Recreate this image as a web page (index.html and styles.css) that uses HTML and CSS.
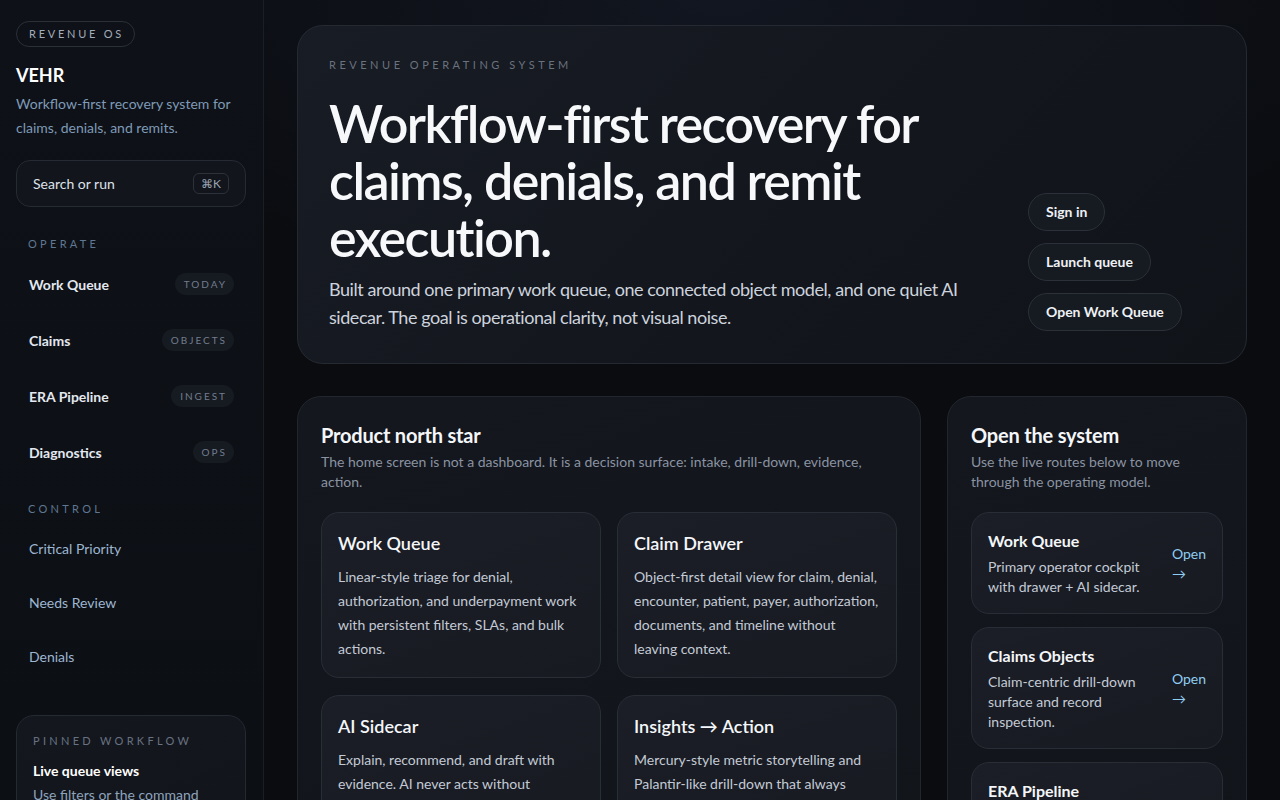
FILE: index.html
```html
<!DOCTYPE html>
<html lang="en">
    <head>
        <title>VEHR</title>

        <meta charset="utf-8">

        <link rel="stylesheet" href="styles.css">
    </head>

    <body>
        <div class="app">
            <aside class="sidebar">
                <div class="pill">Revenue OS</div>
                <div class="brand">VEHR</div>
                <div class="tagline">Workflow-first recovery system for claims, denials, and remits.</div>

                <div class="search">
                    <span>Search or run</span>
                    <span class="kbd">&#8984;K</span>
                </div>

                <div class="section-label">Operate</div>
                <nav class="nav">
                    <a class="nav-item"><span>Work Queue</span><span class="tag">Today</span></a>
                    <a class="nav-item"><span>Claims</span><span class="tag">Objects</span></a>
                    <a class="nav-item"><span>ERA Pipeline</span><span class="tag">Ingest</span></a>
                    <a class="nav-item"><span>Diagnostics</span><span class="tag">Ops</span></a>
                </nav>

                <div class="section-label control-label">Control</div>
                <nav class="nav">
                    <a class="nav-item quiet">Critical Priority</a>
                    <a class="nav-item quiet">Needs Review</a>
                    <a class="nav-item quiet">Denials</a>
                </nav>

                <div class="pinned">
                    <div class="section-label">Pinned workflow</div>
                    <div class="pinned-title">Live queue views</div>
                    <div class="pinned-text">Use filters or the command palette to jump between saved queues.</div>
                </div>
            </aside>

            <main class="main">
                <section class="hero">
                    <div class="hero-copy">
                        <div class="eyebrow">Revenue operating system</div>
                        <h1>Workflow-first recovery for claims, denials, and remit execution.</h1>
                        <p>Built around one primary work queue, one connected object model, and one quiet AI sidecar. The goal is operational clarity, not visual noise.</p>
                    </div>
                    <div class="hero-actions">
                        <a class="btn">Sign in</a>
                        <a class="btn">Launch queue</a>
                        <a class="btn">Open Work Queue</a>
                    </div>
                </section>

                <div class="row">
                    <section class="panel">
                        <h2>Product north star</h2>
                        <p class="lead">The home screen is not a dashboard. It is a decision surface: intake, drill-down, evidence, action.</p>
                        <div class="tiles">
                            <div class="tile">
                                <h3>Work Queue</h3>
                                <p>Linear-style triage for denial, authorization, and underpayment work with persistent filters, SLAs, and bulk actions.</p>
                            </div>
                            <div class="tile">
                                <h3>Claim Drawer</h3>
                                <p>Object-first detail view for claim, denial, encounter, patient, payer, authorization, documents, and timeline without leaving context.</p>
                            </div>
                            <div class="tile">
                                <h3>AI Sidecar</h3>
                                <p>Explain, recommend, and draft with evidence. AI never acts without operator approval.</p>
                            </div>
                            <div class="tile">
                                <h3>Insights &rarr; Action</h3>
                                <p>Mercury-style metric storytelling and Palantir-like drill-down that always surfaces the next action.</p>
                            </div>
                        </div>
                    </section>

                    <section class="panel">
                        <h2>Open the system</h2>
                        <p class="lead">Use the live routes below to move through the operating model.</p>
                        <div class="routes">
                            <div class="route">
                                <div class="route-text">
                                    <h4>Work Queue</h4>
                                    <p>Primary operator cockpit with drawer + AI sidecar.</p>
                                </div>
                                <a class="open">Open &rarr;</a>
                            </div>
                            <div class="route">
                                <div class="route-text">
                                    <h4>Claims Objects</h4>
                                    <p>Claim-centric drill-down surface and record inspection.</p>
                                </div>
                                <a class="open">Open &rarr;</a>
                            </div>
                            <div class="route">
                                <div class="route-text">
                                    <h4>ERA Pipeline</h4>
                                    <p>Remit ingest, matching, posting, and exception handling.</p>
                                </div>
                                <a class="open">Open &rarr;</a>
                            </div>
                        </div>
                    </section>
                </div>
            </main>
        </div>
    </body>
</html>
```
FILE: styles.css
```css
* {
    box-sizing: border-box;
}
body {
    margin: 0;
    height: 100vh;
    overflow: hidden;
    background: #0a0c10;
    color: #e8ecf2;
    font-family: Lato, "Noto Sans", sans-serif;
}
h1, h2, h3, h4, p {
    margin: 0;
}
a {
    color: inherit;
    text-decoration: none;
}
.app {
    display: grid;
    grid-template-columns: 264px 1fr;
    height: 100vh;
}

/* sidebar */
.sidebar {
    background: linear-gradient(180deg, #0e1117 0%, #0c0f14 100%);
    border-right: 1px solid #1a1e25;
    padding: 21px 17px 0 16px;
    overflow: hidden;
}
.pill {
    display: inline-block;
    height: 26px;
    line-height: 24px;
    padding: 0 10px 0 12px;
    border: 1px solid #2a2f38;
    border-radius: 999px;
    font-size: 11px;
    letter-spacing: 0.25em;
    text-transform: uppercase;
    color: #a3acba;
}
.brand {
    margin-top: 16px;
    font-size: 18px;
    line-height: 24px;
    font-weight: 700;
    color: #fff;
}
.tagline {
    margin-top: 5px;
    font-size: 14px;
    line-height: 24px;
    color: #7f9ab6;
}
.search {
    display: flex;
    align-items: center;
    justify-content: space-between;
    height: 47px;
    margin-top: 20px;
    padding: 0 16px 0 16px;
    background: #12151b;
    border: 1px solid #262a33;
    border-radius: 14px;
    font-size: 14px;
    color: #dde2ea;
}
.kbd {
    height: 21px;
    line-height: 19px;
    padding: 0 7px;
    border: 1px solid #2c313a;
    border-radius: 6px;
    font-size: 12px;
    color: #9aa4b3;
}
.section-label {
    margin-top: 29px;
    padding-left: 12px;
    font-size: 11px;
    line-height: 16px;
    letter-spacing: 0.3em;
    text-transform: uppercase;
    color: #5f7792;
}
.control-label {
    margin-top: 27px;
}
.nav {
    display: flex;
    flex-direction: column;
    gap: 12px;
    margin-top: 10px;
}
.nav-item {
    display: flex;
    align-items: center;
    justify-content: space-between;
    height: 44px;
    padding: 0 12px 0 13px;
    border-radius: 12px;
    font-size: 14px;
    font-weight: 700;
    color: #e3e8f0;
}
.nav-item.quiet {
    height: 42px;
    font-weight: 400;
    color: #9db6d1;
}
.tag {
    height: 22px;
    line-height: 22px;
    padding: 0 7px 0 9px;
    border-radius: 999px;
    background: #161a21;
    font-size: 10px;
    font-weight: 400;
    letter-spacing: 0.2em;
    text-transform: uppercase;
    color: #727d8e;
}
.pinned {
    margin-top: 38px;
    padding: 17px 16px 16px 16px;
    background: linear-gradient(160deg, #14171e 0%, #111419 100%);
    border: 1px solid #242932;
    border-radius: 18px;
}
.pinned .section-label {
    margin-top: 0;
    padding-left: 0;
    color: #687282;
}
.pinned-title {
    margin-top: 12px;
    font-size: 14px;
    line-height: 20px;
    font-weight: 700;
    color: #fff;
}
.pinned-text {
    margin-top: 3px;
    font-size: 14px;
    line-height: 22px;
    color: #8ea3bb;
}

/* main */
.main {
    padding: 25px 33px 0 33px;
    background: radial-gradient(ellipse 700px 300px at 45% 0%, #121620 0%, rgba(10, 12, 16, 0) 100%);
    overflow: hidden;
}
.hero {
    display: grid;
    grid-template-columns: 1fr 186px;
    align-items: end;
    padding: 31px 32px 32px 31px;
    background: linear-gradient(135deg, #181c24 0%, #13161d 55%, #101318 100%);
    border: 1px solid #252a32;
    border-radius: 26px;
}
.hero-copy {
    max-width: 650px;
}
.eyebrow {
    font-size: 11px;
    line-height: 16px;
    letter-spacing: 0.32em;
    text-transform: uppercase;
    color: #6a727e;
}
.hero h1 {
    margin-top: 22px;
    font-size: 52px;
    line-height: 57px;
    font-weight: 600;
    letter-spacing: -0.03em;
    color: #f7f8fa;
}
.hero p {
    margin-top: 9px;
    font-size: 18px;
    line-height: 28px;
    letter-spacing: -0.025em;
    color: #cdd3dd;
}
.hero-actions {
    display: flex;
    flex-direction: column;
    align-items: flex-start;
    gap: 12px;
}
.btn {
    height: 38px;
    line-height: 36px;
    padding: 0 17px;
    background: #161a21;
    border: 1px solid #2b3039;
    border-radius: 999px;
    font-size: 14px;
    font-weight: 700;
    color: #eef1f5;
}
.row {
    display: grid;
    grid-template-columns: 1fr 300px;
    gap: 26px;
    margin-top: 32px;
}
.panel {
    padding: 24px 23px 24px 23px;
    background: linear-gradient(160deg, #14171e 0%, #111419 100%);
    border: 1px solid #22262e;
    border-radius: 24px;
}
.panel h2 {
    font-size: 20px;
    line-height: 28px;
    font-weight: 700;
    letter-spacing: -0.01em;
    color: #f4f6f9;
}
.lead {
    margin-top: 3px;
    font-size: 14px;
    line-height: 20px;
    color: #8a93a2;
}
.tiles {
    display: grid;
    grid-template-columns: 1fr 1fr;
    gap: 17px 16px;
    margin-top: 20px;
}
.tile {
    padding: 17px 16px 16px 16px;
    background: linear-gradient(160deg, #1b1e26 0%, #171a21 100%);
    border: 1px solid #292d36;
    border-radius: 18px;
}
.tile h3 {
    font-size: 18px;
    line-height: 26px;
    font-weight: 600;
    color: #f4f6f9;
}
.tile p {
    margin-top: 9px;
    font-size: 14px;
    line-height: 24px;
    color: #c3cad5;
}
.routes {
    display: flex;
    flex-direction: column;
    gap: 13px;
    margin-top: 20px;
}
.route {
    display: flex;
    align-items: center;
    gap: 20px;
    padding: 18px 16px 16px 16px;
    background: linear-gradient(160deg, #1b1e26 0%, #171a21 100%);
    border: 1px solid #292d36;
    border-radius: 18px;
}
.route-text {
    flex: 1;
}
.route h4 {
    font-size: 16px;
    line-height: 20px;
    font-weight: 700;
    color: #f4f6f9;
}
.route p {
    margin-top: 6px;
    font-size: 14px;
    line-height: 20px;
    color: #c3cad5;
}
.open {
    flex: 0 0 34px;
    font-size: 14px;
    line-height: 20px;
    color: #8fcdf2;
}
```
